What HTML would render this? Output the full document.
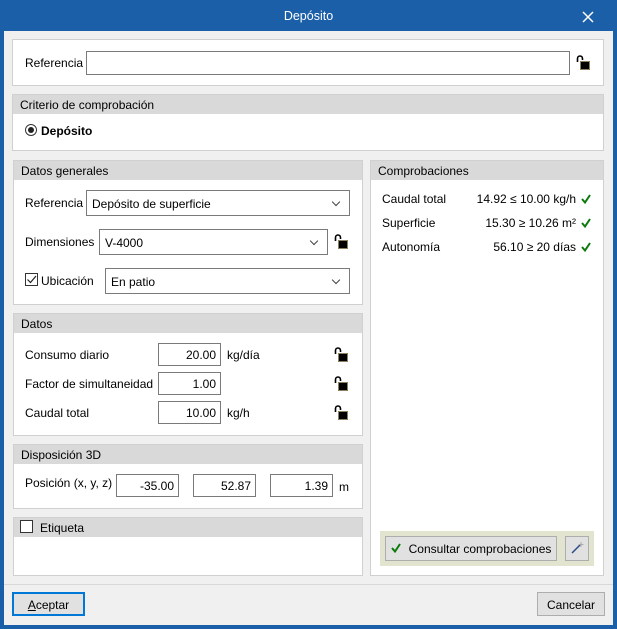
<!DOCTYPE html><html><head><meta charset="utf-8"><style>
*{box-sizing:border-box;margin:0;padding:0}
body{width:617px;height:629px;background:#1a5fa8;font-family:"Liberation Sans",sans-serif;font-size:12px;color:#000;position:relative;overflow:hidden}
.a{position:absolute}
.win{position:absolute;left:4px;top:31px;width:609px;height:594px;background:#f0f0f0}
.pan{position:absolute;background:#fff;border:1px solid #d0d0d0}
.hd{position:absolute;left:0;top:0;right:0;height:19px;background:#d9d9d9;padding:3px 0 0 7px}
.in{position:absolute;background:#fff;border:1px solid #7a7a7a;text-align:right;padding:4px 4px 0 0}
.cb{position:absolute;background:#fff;border:1px solid #7a7a7a;padding:6px 0 0 5px}
.cb:after{content:"";position:absolute;right:10px;top:8px;width:5px;height:5px;border-right:1px solid #444;border-bottom:1px solid #444;transform:rotate(45deg)}
.lk{position:absolute;width:14px;height:15px}
.btn{position:absolute;background:#e1e1e1;border:1px solid #adadad;text-align:center;padding-top:4px}
</style></head><body>
<div class="a" style="left:0;top:0;width:617px;height:31px;color:#fff;text-align:center;padding-top:9px;font-size:12.5px">Depósito</div>
<svg class="a" style="left:582px;top:11px" width="12" height="12"><path d="M1 1L11 11M11 1L1 11" stroke="#fff" stroke-width="1.5"/></svg>
<div class="win"></div>
<svg width="0" height="0" style="position:absolute"><defs><g id="lock"><path d="M1.5 7V3.5a2.5 2.5 0 0 1 5 0V5" fill="none" stroke="#000" stroke-width="1.6"/><rect x="4.5" y="6.5" width="9" height="8" fill="#000" stroke="#8a8060" stroke-width="1"/></g></defs></svg>
<div class="pan" style="left:12px;top:39px;width:592px;height:47px"></div>
<div class="a" style="left:25px;top:56px">Referencia</div>
<div class="in" style="left:86px;top:51px;width:484px;height:24px"></div>
<svg class="lk" style="left:576px;top:55px"><use href="#lock"/></svg>
<div class="pan" style="left:12px;top:94px;width:592px;height:57px"><div class="hd">Criterio de comprobación</div></div>
<div class="a" style="left:25px;top:124px;width:12px;height:12px;border:1px solid #333;border-radius:50%"></div>
<div class="a" style="left:28px;top:127px;width:6px;height:6px;background:#222;border-radius:50%"></div>
<div class="a" style="left:41px;top:124px;font-weight:bold">Depósito</div>
<div class="pan" style="left:13px;top:160px;width:350px;height:145px"><div class="hd">Datos generales</div></div>
<div class="a" style="left:25px;top:196px">Referencia</div>
<div class="cb" style="left:86px;top:190px;width:264px;height:26px">Depósito de superficie</div>
<div class="a" style="left:25px;top:235px">Dimensiones</div>
<div class="cb" style="left:99px;top:229px;width:229px;height:26px">V-4000</div>
<svg class="lk" style="left:334px;top:234px"><use href="#lock"/></svg>
<div class="a" style="left:25px;top:273px;width:13px;height:13px;border:1px solid #333;background:#fff"></div>
<svg class="a" style="left:26px;top:274px" width="11" height="11"><path d="M1.5 5.5L4.5 8.5L10 2" fill="none" stroke="#222" stroke-width="1.2"/></svg>
<div class="a" style="left:41px;top:274px">Ubicación</div>
<div class="cb" style="left:105px;top:268px;width:245px;height:26px">En patio</div>
<div class="pan" style="left:13px;top:313px;width:350px;height:123px"><div class="hd">Datos</div></div>
<div class="a" style="left:25px;top:348px">Consumo diario</div>
<div class="in" style="left:158px;top:343px;width:63px;height:23px">20.00</div>
<div class="a" style="left:227px;top:348px">kg/día</div>
<svg class="lk" style="left:334px;top:347px"><use href="#lock"/></svg>
<div class="a" style="left:25px;top:377px">Factor de simultaneidad</div>
<div class="in" style="left:158px;top:372px;width:63px;height:23px">1.00</div>
<svg class="lk" style="left:334px;top:376px"><use href="#lock"/></svg>
<div class="a" style="left:25px;top:406px">Caudal total</div>
<div class="in" style="left:158px;top:401px;width:63px;height:23px">10.00</div>
<div class="a" style="left:227px;top:406px">kg/h</div>
<svg class="lk" style="left:334px;top:405px"><use href="#lock"/></svg>
<div class="pan" style="left:13px;top:444px;width:350px;height:65px"><div class="hd">Disposición 3D</div></div>
<div class="a" style="left:25px;top:476px">Posición (x, y, z)</div>
<div class="in" style="left:116px;top:474px;width:63px;height:23px">-35.00</div>
<div class="in" style="left:193px;top:474px;width:63px;height:23px">52.87</div>
<div class="in" style="left:270px;top:474px;width:63px;height:23px">1.39</div>
<div class="a" style="left:339px;top:480px">m</div>
<div class="pan" style="left:13px;top:517px;width:350px;height:59px"><div class="hd" style="padding-left:26px">Etiqueta</div></div>
<div class="a" style="left:20px;top:520px;width:13px;height:13px;border:1px solid #333;background:#fff"></div>
<div class="pan" style="left:370px;top:160px;width:234px;height:416px"><div class="hd">Comprobaciones</div></div>
<div class="a" style="left:382px;top:192px">Caudal total</div>
<div class="a" style="left:380px;top:192px;width:196px;text-align:right">14.92 ≤ 10.00 kg/h</div>
<div class="a" style="left:382px;top:216px">Superficie</div>
<div class="a" style="left:380px;top:216px;width:196px;text-align:right">15.30 ≥ 10.26 m²</div>
<div class="a" style="left:382px;top:240px">Autonomía</div>
<div class="a" style="left:380px;top:240px;width:196px;text-align:right">56.10 ≥ 20 días</div>
<svg class="a" style="left:581px;top:194px" width="12" height="60"><g fill="none" stroke="#0a7a0a" stroke-width="2"><path d="M1 5L4 8.5L9 1"/><path d="M1 29L4 32.5L9 25"/><path d="M1 53L4 56.5L9 49"/></g></svg>
<div class="a" style="left:380px;top:531px;width:214px;height:35px;background:#e3e4cf"></div>
<div class="btn" style="left:385px;top:536px;width:172px;height:25px;padding-left:18px;padding-top:5px">Consultar comprobaciones</div>
<svg class="a" style="left:391px;top:543px" width="12" height="12"><path d="M1 5L4 8.5L9 1" fill="none" stroke="#0a7a0a" stroke-width="2"/></svg>
<div class="btn" style="left:565px;top:536px;width:24px;height:25px"></div>
<svg class="a" style="left:570px;top:541px" width="14" height="14"><path d="M2 12L10 4" stroke="#2a4a8a" stroke-width="1.5"/><path d="M11 1v5M8.5 3.5h5" stroke="#aaa" stroke-width="1"/></svg>
<div class="a" style="left:4px;top:584px;width:609px;height:1px;background:#d8d8d8"></div>
<div class="btn" style="left:12px;top:592px;width:73px;height:24px;border:2px solid #0078d7;padding-top:4px"><u>A</u>ceptar</div>
<div class="btn" style="left:537px;top:592px;width:68px;height:24px;padding-top:5px">Cancelar</div>
</body></html>
